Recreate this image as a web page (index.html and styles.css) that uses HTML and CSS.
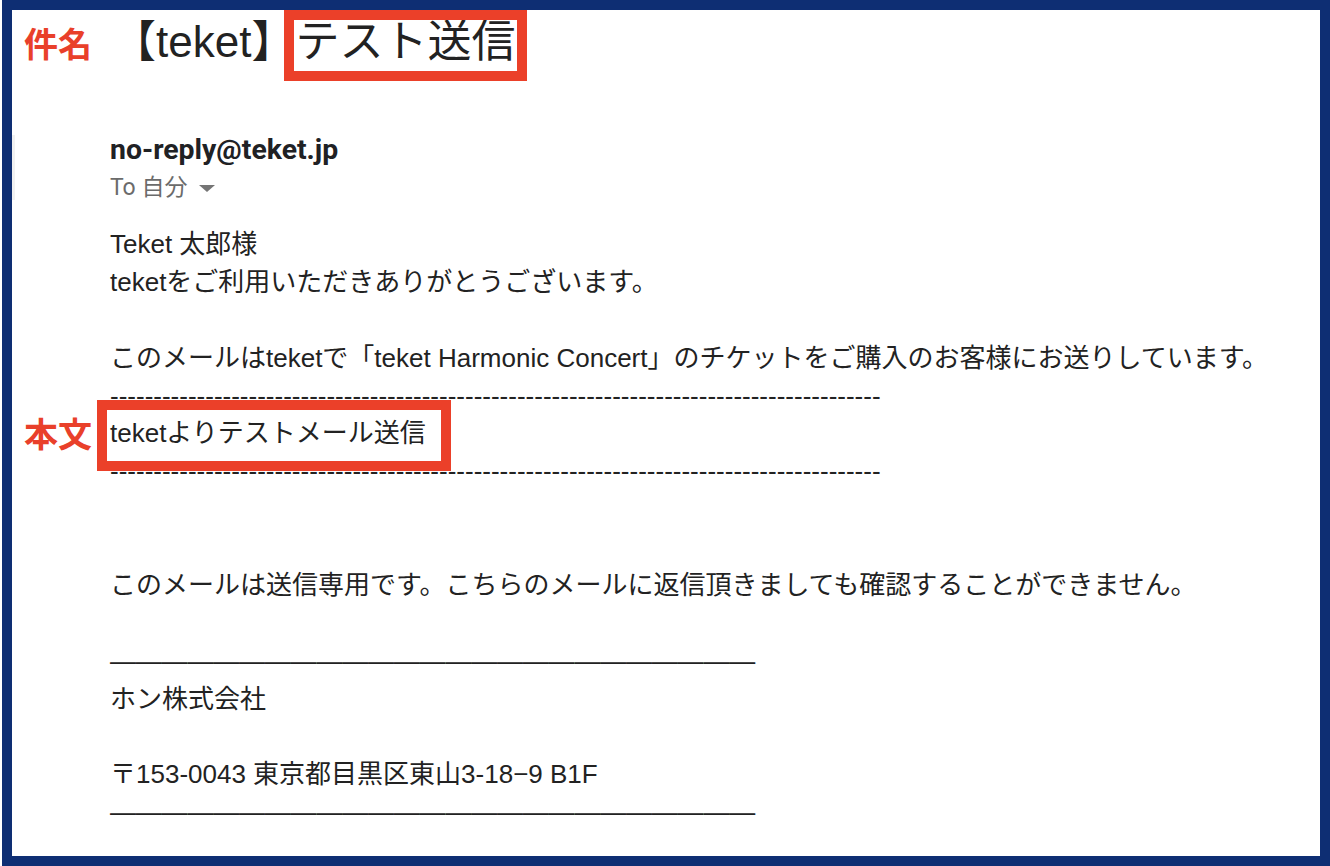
FILE: index.html
```html
<!DOCTYPE html>
<html lang="ja">
<head>
<meta charset="utf-8">
<title>teket テスト送信</title>
<link rel="stylesheet" href="styles.css">
</head>
<body>
<div class="frame">
  <div class="subject-row">
    <span class="label label-subject">件名</span>
    <span class="subject">【teket】<span class="mark mark-subject">テスト送信</span></span>
  </div>

  <div class="sender">
    <div class="strip"></div>
    <div class="sender-text">
      <div class="from">no-reply@teket.jp</div>
      <div class="to">To 自分 <span class="caret"></span></div>
    </div>
  </div>

  <div class="body">
    <div class="line">Teket 太郎様</div>
    <div class="line">teketをご利用いただきありがとうございます。</div>
    <div class="line blank"></div>
    <div class="line">このメールはteketで「teket Harmonic Concert」のチケットをご購入のお客様にお送りしています。</div>
    <div class="line dashes">-----------------------------------------------------------------------------------------</div>
    <div class="line labeled">
      <span class="label label-body">本文</span>
      <span class="mark mark-body">teketよりテストメール送信</span>
    </div>
    <div class="line dashes">-----------------------------------------------------------------------------------------</div>
    <div class="line blank"></div>
    <div class="line blank"></div>
    <div class="line">このメールは送信専用です。こちらのメールに返信頂きましても確認することができません。</div>
    <div class="line blank"></div>
    <div class="line rule">—————————————————————————</div>
    <div class="line">ホン株式会社</div>
    <div class="line blank"></div>
    <div class="line">〒153-0043 東京都目黒区東山3-18−9 B1F</div>
    <div class="line rule">—————————————————————————</div>
  </div>
</div>
</body>
</html>
```

FILE: styles.css
```css
*, *::before, *::after { box-sizing: border-box; }

html, body {
  margin: 0;
  padding: 0;
  background: #ffffff;
}

body {
  width: 1330px;
  height: 866px;
  overflow: hidden;
  font-family: "Liberation Sans", "Noto Sans CJK JP", sans-serif;
  color: #222222;
}

.frame {
  margin-left: 2px;
  width: 1328px;
  height: 866px;
  border: 10px solid #0e2e73;
  overflow: hidden;
}

.subject-row {
  display: flex;
  align-items: baseline;
  height: 64px;
}

.label {
  color: #e9402a;
  font-family: "Noto Sans CJK JP", sans-serif;
  font-weight: 700;
}

.label-subject {
  font-size: 34px;
  width: 100px;
  padding-left: 12px;
}

.subject {
  font-size: 44px;
  line-height: 64px;
  color: #222222;
  font-family: "Liberation Sans", "Noto Sans CJK JP", sans-serif;
}

.mark {
  position: relative;
  display: inline-block;
}

.mark::after {
  content: "";
  position: absolute;
  border: 10px solid #eb4029;
}

.mark-subject::after {
  left: -11px;
  top: 0px;
  width: 243px;
  height: 71px;
}

.sender {
  display: flex;
  margin-top: 57px;
}

.strip {
  width: 3px;
  height: 65px;
  margin-top: 4px;
  background: #f1f1f1;
}

.sender-text {
  margin-left: 95px;
}

.from {
  font-family: Roboto, "Noto Sans CJK JP", sans-serif;
  font-weight: 700;
  font-size: 28.4px;
  line-height: 38px;
  color: #202124;
}

.to {
  font-family: Roboto, "Noto Sans CJK JP", sans-serif;
  font-size: 23px;
  line-height: 38px;
  color: #6b6b6b;
  display: flex;
  align-items: center;
  gap: 6px;
}

.caret {
  display: inline-block;
  width: 0;
  height: 0;
  margin-left: 6px;
  border-left: 8px solid transparent;
  border-right: 8px solid transparent;
  border-top: 7px solid #757575;
}

.body {
  margin-top: 18px;
  padding-left: 98px;
  font-size: 26px;
  line-height: 38px;
}

.line {
  height: 37.9px;
  white-space: nowrap;
}

.dashes {
  color: #222222;
}

.rule {
  color: #222222;
  letter-spacing: -0.2px;
}

.labeled {
  display: flex;
  align-items: center;
  margin-left: -86px;
}

.label-body {
  font-size: 34px;
  width: 86px;
}

.mark-body::after {
  left: -13px;
  top: -14px;
  width: 354px;
  height: 71px;
}
```
